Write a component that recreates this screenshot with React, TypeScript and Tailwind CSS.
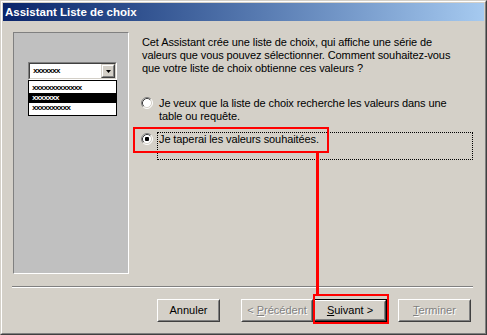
import React from "react";

function Radio({ checked }: { checked?: boolean }) {
  return (
    <svg width="12" height="12" viewBox="0 0 12 12" className="block shrink-0">
      <circle cx="6" cy="6" r="5" fill="#ffffff" />
      <path d="M2.11 9.89 A5.5 5.5 0 0 1 9.89 2.11" fill="none" stroke="#808080" strokeWidth="1" />
      <path d="M9.89 2.11 A5.5 5.5 0 0 1 2.11 9.89" fill="none" stroke="#ffffff" strokeWidth="1" />
      <path d="M2.82 9.18 A4.5 4.5 0 0 1 9.18 2.82" fill="none" stroke="#404040" strokeWidth="1" />
      <path d="M9.18 2.82 A4.5 4.5 0 0 1 2.82 9.18" fill="none" stroke="#d4d0c8" strokeWidth="1" />
      {checked && <rect x="4" y="4" width="4" height="4" rx="1" fill="#000000" />}
    </svg>
  );
}

function Fake({ n, white }: { n: number; white?: boolean }) {
  return (
    <span
      className={
        "font-['Liberation_Mono',monospace] font-bold text-[8px] leading-[10px] tracking-[-1px] " +
        (white ? "text-white" : "text-black")
      }
    >
      {"x".repeat(n)}
    </span>
  );
}

function Btn({
  children,
  w,
  def,
}: {
  children: React.ReactNode;
  w: string;
  def?: boolean;
}) {
  const inner = (
    <div className="w-full h-full border border-t-white border-l-white border-r-[#404040] border-b-[#404040]">
      <div className="w-full h-full border border-t-[#d4d0c8] border-l-[#d4d0c8] border-r-[#808080] border-b-[#808080] flex items-center justify-center bg-[#d4d0c8]">
        {children}
      </div>
    </div>
  );
  return (
    <div className={w + " h-[23px] " + (def ? "border border-black" : "")}>{inner}</div>
  );
}

export default function App() {
  return (
    <div className="relative w-[487px] h-[335px] font-['Liberation_Sans',Arial,sans-serif] text-[11px] text-black">
      <div className="w-full h-full border border-t-[#d4d0c8] border-l-[#d4d0c8] border-r-[#404040] border-b-[#404040]">
        <div className="w-full h-full border border-t-white border-l-white border-r-[#808080] border-b-[#808080] bg-[#d4d0c8] p-px flex flex-col">
          {/* title bar */}
          <div className="h-[18px] bg-gradient-to-r from-[#0a246a] to-[#a6caf0] flex items-center pl-[2px]">
            <span className="text-white font-bold text-[11.5px] leading-[18px]">Assistant Liste de choix</span>
          </div>

          {/* main row */}
          <div className="flex items-start">
            {/* left picture panel */}
            <div className="ml-[10px] mt-[11px] w-[116px] h-[242px] border border-t-[#808080] border-l-[#808080] border-r-white border-b-white bg-[#c0c0c0] pl-[14px] pt-[29px] flex flex-col">
              <div className="w-[89px] h-[18px] border border-t-[#808080] border-l-[#808080] border-r-white border-b-white">
                <div className="w-full h-full border border-t-[#404040] border-l-[#404040] border-r-[#d4d0c8] border-b-[#d4d0c8] bg-white flex items-center">
                  <div className="flex-1 pl-[3px] flex items-center">
                    <Fake n={7} />
                  </div>
                  <div className="w-[14px] h-full border border-t-[#d4d0c8] border-l-[#d4d0c8] border-r-[#404040] border-b-[#404040]">
                    <div className="w-full h-full border border-t-white border-l-white border-r-[#808080] border-b-[#808080] bg-[#d4d0c8] flex items-center justify-center">
                      <svg width="5" height="3" viewBox="0 0 5 3" className="block">
                        <polygon points="0,0 5,0 2.5,3" fill="#000" />
                      </svg>
                    </div>
                  </div>
                </div>
              </div>
              <div className="w-[89px] h-[36px] border border-black bg-white pt-[2px] flex flex-col">
                <div className="h-[10px] pl-[3px] flex items-center">
                  <Fake n={13} />
                </div>
                <div className="h-[10px] pl-[3px] flex items-center bg-black">
                  <Fake n={7} white />
                </div>
                <div className="h-[10px] pl-[3px] flex items-center">
                  <Fake n={10} />
                </div>
              </div>
            </div>

            {/* right column */}
            <div className="ml-[12px] mt-[15px] flex flex-col tracking-[-0.1px]">
              <p className="pl-px leading-[13px] whitespace-nowrap">
                Cet Assistant crée une liste de choix, qui affiche une série de
                <br />
                valeurs que vous pouvez sélectionner. Comment souhaitez-vous
                <br />
                que votre liste de choix obtienne ces valeurs ?
              </p>
              <div className="mt-[21px] flex items-start">
                <div className="mt-[1px]">
                  <Radio />
                </div>
                <div className="ml-[4px] w-[316px] h-[28px] border border-transparent pl-px leading-[13px] whitespace-nowrap">
                  Je veux que la liste de choix recherche les valeurs dans une
                  <br />
                  table ou requête.
                </div>
              </div>
              <div className="mt-[8px] flex items-start">
                <div className="mt-[1px]">
                  <Radio checked />
                </div>
                <div className="ml-[4px] w-[316px] h-[28px] border border-dotted border-black pl-px leading-[13px] whitespace-nowrap">
                  Je taperai les valeurs souhaitées.
                </div>
              </div>
            </div>
          </div>

          {/* separator */}
          <div className="ml-[9px] mt-[12px] w-[461px] h-[2px] border-t border-t-[#808080] border-b border-b-white" />

          {/* buttons */}
          <div className="mt-[11px] flex items-start">
            <div className="ml-[154px]">
              <Btn w="w-[63px]">
                <span>Annuler</span>
              </Btn>
            </div>
            <div className="ml-[21px]">
              <Btn w="w-[72px]">
                <span className="text-[#808080] [text-shadow:1px_1px_0_#ffffff]">
                  &lt; <span className="underline">P</span>récédent
                </span>
              </Btn>
            </div>
            <div>
              <Btn w="w-[74px]" def>
                <span>
                  <span className="underline">S</span>uivant &gt;
                </span>
              </Btn>
            </div>
            <div className="ml-[11px]">
              <Btn w="w-[73px]">
                <span className="text-[#808080] [text-shadow:1px_1px_0_#ffffff]">
                  <span className="underline">T</span>erminer
                </span>
              </Btn>
            </div>
          </div>
        </div>
      </div>

      {/* red annotations */}
      <div className="absolute left-[133px] top-[127px] w-[196px] h-[26px] border-2 border-[#ff0000]" />
      <div className="absolute left-[316px] top-[152px] w-[3px] h-[142px] bg-[#ff0000]" />
      <div className="absolute left-[313px] top-[294px] w-[76px] h-[30px] border-2 border-[#ff0000]" />
    </div>
  );
}
